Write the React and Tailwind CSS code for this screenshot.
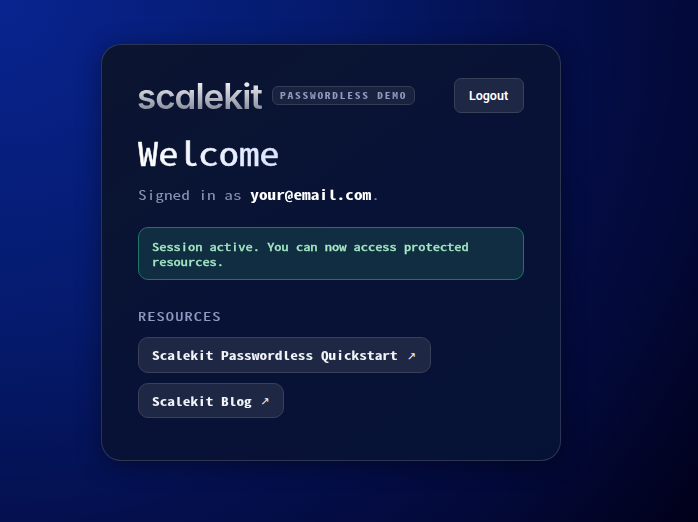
const mono = "font-['Noto_Sans_Mono_CJK_JP','Liberation_Mono',monospace]";
const wide = 'inline-block origin-left scale-x-[1.3333] whitespace-pre';

function ResourceLink({ children, className, textClass }) {
  return (
    <a
      href="#"
      className={`flex items-center rounded-[10px] border border-[#394159] bg-[#1e2743] pl-[13.4px] font-bold text-[11.52px] leading-none text-[#f0f3f8] ${className}`}
    >
      <span className={`${wide} ${textClass}`}>{children}</span>
      <span className="font-['DejaVu_Sans',sans-serif] text-[11px] font-normal">↗</span>
    </a>
  );
}

export default function App() {
  return (
    <div
      className={`${mono} flex h-[522px] w-[698px] items-start overflow-hidden bg-[radial-gradient(circle_at_0%_0%,#08248f_0%,#051a6c_38%,#040f4c_62%,#030938_81%,#01001a_100%)] pl-[101px] pt-[44px]`}
    >
      <main className="flex h-[417px] w-[460px] flex-col items-start rounded-[20px] border border-white/15 bg-[linear-gradient(145deg,#0b1530,#081236_50%,#051236)] px-[36px] pt-[33px] shadow-[0_4px_24px_rgba(0,0,0,0.4)]">
        <header className="flex h-[35px] w-full items-center">
          <span className="-ml-px w-[125px] whitespace-nowrap bg-[linear-gradient(180deg,#f4f4f6_15%,#85899a_85%)] bg-clip-text font-['Inter',sans-serif] text-[35px] font-semibold leading-[44px] tracking-[-1px] text-transparent [font-feature-settings:'cv11']">
            scalekit
          </span>
          <span className="ml-[10px] flex h-[19px] w-[143px] shrink-0 items-center rounded-[6px] border border-[#343d56] bg-[#19233f] pl-[7px] text-[8.64px] font-bold leading-none text-[#8f9bc0]">
            <span className={`${wide} tracking-[1.296px]`}>PASSWORDLESS DEMO</span>
          </span>
          <button className="ml-auto h-[35px] w-[70px] rounded-[7px] border border-[#394159] bg-[#1e2743] pt-[1px] pr-[1px] font-['Roboto',sans-serif] text-[12.5px] font-semibold text-white">
            Logout
          </button>
        </header>
        <h1 className="mt-[17px] inline-block origin-left scale-x-[1.24] bg-[linear-gradient(90deg,#ffffff,#dbe4ff)] bg-clip-text text-[32.6px] leading-[44px] text-transparent [-webkit-text-stroke:0.5px_transparent]">
          Welcome
        </h1>
        <p className={`${wide} mt-[11px] text-[12.96px] leading-[20px] text-[#8893b8]`}>
          Signed in as <strong className="font-bold text-white">your@email.com</strong>.
        </p>
        <div className="mt-[22px] h-[53px] w-full rounded-[10px] border border-[#1f7566] bg-[#102d42] px-[13.4px] pt-[11px] text-[10.8px] leading-[15px] text-[#a7ebc6]">
          <p className="w-[268px] origin-left scale-x-[1.3333] [-webkit-text-stroke:0.3px_#a7ebc6]">
            Session active. You can now access protected resources.
          </p>
        </div>
        <h2
          className={`${wide} mt-[27px] text-[12.24px] leading-[18px] tracking-[0.85px] text-[#8f9bc0] [-webkit-text-stroke:0.2px_#8f9bc0]`}
        >
          RESOURCES
        </h2>
        <div className="mt-[12px] flex flex-col items-start gap-[10px]">
          <ResourceLink className="h-[36px] w-[293px] pt-[2px]" textClass="mr-[70px]">
            Scalekit Passwordless Quickstart
          </ResourceLink>
          <ResourceLink className="h-[35px] w-[146px] pt-[2px]" textClass="mr-[33px]">
            Scalekit Blog
          </ResourceLink>
        </div>
      </main>
    </div>
  );
}
